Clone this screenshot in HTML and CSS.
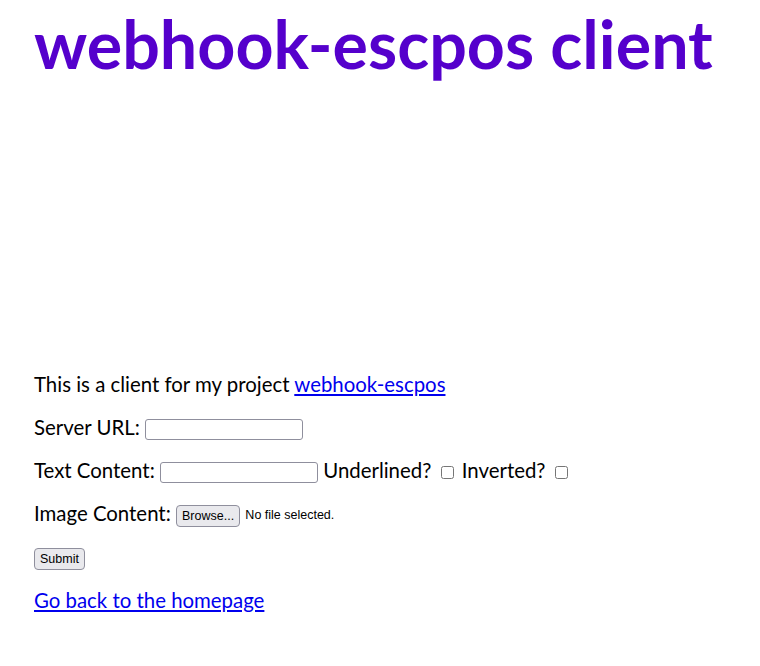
FILE: index.html
```html
<!DOCTYPE html>
<html lang="en">
<head>
    <meta charset="UTF-8">
    <meta name="viewport" content="width=device-width, initial-scale=1.0">
    <title>webhook-escpos client</title>
    <link rel="stylesheet" href="styles.css">
</head>
<body>
    <h1 class="title">webhook-escpos client</h1>
    <div class="banner"></div>
    <p>This is a client for my project <a href="#">webhook-escpos</a></p>
    <form id="printForm">
        <p>
            <label for="server">Server URL:</label>
            <input type="text" id="server" name="server" class="field">
        </p>
        <p>
            <label for="text">Text Content:</label>
            <input type="text" id="text" name="text" class="field">
            <label for="underline">Underlined?</label>
            <input type="checkbox" id="underline" name="underline" class="check">
            <label for="invert">Inverted?</label>
            <input type="checkbox" id="invert" name="invert" class="check">
        </p>
        <p>
            <label for="image">Image Content:</label>
            <span class="file-picker">
                <button type="button" class="btn">Browse...</button>
                <span class="file-name">No file selected.</span>
            </span>
        </p>
        <p class="actions">
            <button type="button" class="btn">Submit</button>
        </p>
    </form>
    <p><a href="#">Go back to the homepage</a></p>
</body>
</html>
```

FILE: styles.css
```css
body {
    font-family: "Lato", sans-serif;
    font-size: 20.4px;
    margin: 0 34px;
    color: #000;
}
.title {
    color: #5500cc;
    font-size: 66.4px;
    margin: 4px 0 0;
    line-height: 1.2;
}
.banner {
    height: 288px;
}
p {
    margin: 0 0 18px;
    line-height: 25px;
}
.actions {
    line-height: 19px;
}
a {
    color: #0000ee;
}
.field {
    width: 152px;
    height: 17px;
    padding: 1px 2px;
    border: 1px solid #8f8f9d;
    border-radius: 3px;
    vertical-align: middle;
}
.check {
    width: 13px;
    height: 13px;
    margin: 3px 3px 3px 4px;
    vertical-align: middle;
}
.btn {
    font-family: "Liberation Sans", sans-serif;
    font-size: 12.5px;
    padding: 3px 5px;
    background: #e9e9ed;
    border: 1px solid #8f8f9d;
    border-radius: 4px;
    color: #000;
    vertical-align: middle;
}
.file-name {
    font-family: "Liberation Sans", sans-serif;
    font-size: 12.5px;
    vertical-align: middle;
}
```
